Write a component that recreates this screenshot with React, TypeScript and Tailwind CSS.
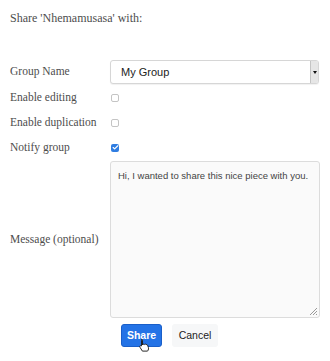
import { Check } from "lucide-react";

const serif = "font-['Liberation_Serif',serif]";
const sans = "font-['Liberation_Sans',Arial,sans-serif]";

function Box({ checked }: { checked?: boolean }) {
  return checked ? (
    <span className="flex h-[8px] w-[8px] items-center justify-center rounded-[2px] bg-[#2f7de1]">
      <Check size={7} strokeWidth={4} className="text-white" />
    </span>
  ) : (
    <span className="block h-[8px] w-[8px] rounded-[2px] border border-[#c4c4c4] bg-white" />
  );
}

export default function App() {
  const rows = [
    { label: "Enable editing", checked: false },
    { label: "Enable duplication", checked: false },
    { label: "Notify group", checked: true },
  ];

  return (
    <main className={`min-h-[361px] w-[330px] bg-white ${serif} text-[#4d4d4d]`}>
      <div className="pl-[10px] pt-[9px]">
        <p className="text-[12px] leading-[18px]">Share 'Nhemamusasa' with:</p>

        {/* group select */}
        <div className="mt-[33px] flex items-center">
          <span className="w-[100px] text-[11.5px]">Group Name</span>
          <div className="flex h-[24px] w-[209px] items-stretch rounded-[3px] border border-[#d6d6d6] bg-white shadow-[0_1px_1px_rgba(0,0,0,0.06)]">
            <span className={`flex flex-1 items-center pl-[10px] text-[11px] text-[#222] ${sans}`}>
              My Group
            </span>
            <span className="flex w-[8px] items-center justify-center border-l border-[#c4c4c4] bg-[#e6e6e6] rounded-r-[2px]">
              <span className="block h-0 w-0 border-x-[2px] border-t-[3px] border-x-transparent border-t-[#111]" />
            </span>
          </div>
        </div>

        {/* checkboxes */}
        <div className="mt-[1px] flex flex-col">
          {rows.map((r) => (
            <div key={r.label} className="flex h-[25px] items-center">
              <span className="w-[101px] text-[11.5px]">{r.label}</span>
              <Box checked={r.checked} />
            </div>
          ))}
        </div>

        {/* message */}
        <div className="mt-[1px] flex items-center">
          <span className="w-[100px] text-[11.5px]">Message (optional)</span>
          <div className="relative h-[157px] w-[210px] rounded-[3px] border border-[#dcdcdc] bg-[#fafafa] px-[7px] pt-[7px]">
            <p className={`text-[9.5px] leading-[13px] text-[#444] ${sans}`}>
              Hi, I wanted to share this nice piece with you.
            </p>
            <svg className="absolute bottom-[2px] right-[2px]" width="8" height="8" viewBox="0 0 8 8">
              <path d="M8 1 L1 8 M8 4 L4 8 M8 7 L7 8" stroke="#9a9a9a" strokeWidth="1" />
            </svg>
          </div>
        </div>

        {/* buttons */}
        <div className={`relative mt-[6px] flex gap-[10px] pl-[111px] ${sans}`}>
          <button className="h-[23px] w-[41px] rounded-[3px] border border-[#1a5fc9] bg-[#2473e6] text-[10.5px] font-bold text-white">
            Share
          </button>
          <button className="h-[23px] w-[46px] rounded-[3px] bg-[#f6f7f8] text-[10.5px] text-[#222]">
            Cancel
          </button>
          <svg className="absolute left-[128px] top-[14px]" width="12" height="14" viewBox="0 0 12 14">
            <path
              d="M3.5 1.2c.6 0 1 .4 1 1V7l.4-.6c.5-.4 1.2-.3 1.5.2l.3-.3c.5-.3 1.1-.2 1.4.3.5-.3 1.2-.1 1.4.5l.9 2.4c.3.9.2 1.9-.3 2.7l-.6.9H4.4L2 9.3c-.4-.5-.3-1.2.2-1.5.4-.3 1-.2 1.3.1V2.2c0-.6 0-1 0-1z"
              fill="#fff"
              stroke="#111"
              strokeWidth="0.9"
              strokeLinejoin="round"
            />
          </svg>
        </div>
      </div>
    </main>
  );
}
